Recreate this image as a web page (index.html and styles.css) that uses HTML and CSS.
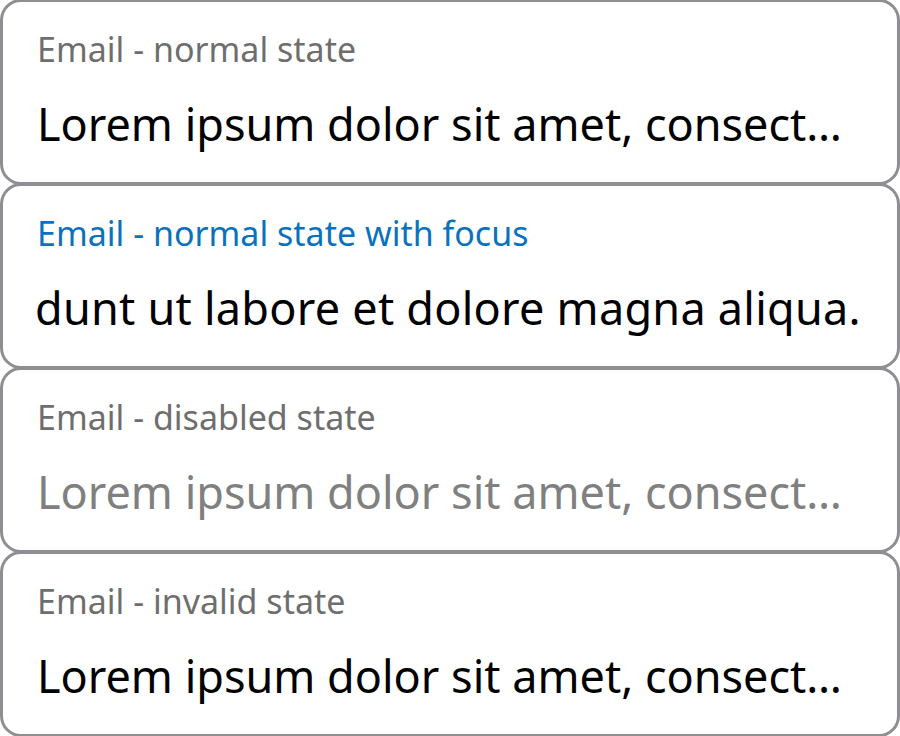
FILE: index.html
```html
<!DOCTYPE html>
<html lang="en">
<head>
<meta charset="utf-8">
<title>Email fields</title>
<link rel="stylesheet" href="styles.css">
</head>
<body>
<div class="list">
  <div class="field">
    <div class="label">Email - normal state</div>
    <div class="value">Lorem ipsum dolor sit amet, consect…</div>
  </div>
  <div class="field field-focus">
    <div class="label">Email - normal state with focus</div>
    <div class="value value-scrolled">dunt ut labore et dolore magna aliqua.</div>
  </div>
  <div class="field field-disabled">
    <div class="label">Email - disabled state</div>
    <div class="value">Lorem ipsum dolor sit amet, consect…</div>
  </div>
  <div class="field">
    <div class="label">Email - invalid state</div>
    <div class="value">Lorem ipsum dolor sit amet, consect…</div>
  </div>
</div>
</body>
</html>
```
FILE: styles.css
```css
html, body {
  margin: 0;
  padding: 0;
  background: #ffffff;
}
body {
  font-family: "Noto Sans", "Open Sans", sans-serif;
}
.list {
  display: flex;
  flex-direction: column;
  padding: 0 1px;
}
.field {
  box-sizing: border-box;
  height: 184px;
  border: 2px solid #8e8e93;
  border-radius: 20px;
  padding: 27px 34px 0 34px;
  background: #ffffff;
  box-shadow: 0 0 0 1px #8e8e93;
}
.label {
  font-size: 34px;
  line-height: 40px;
  color: #6e6e6e;
  white-space: nowrap;
}
.value {
  margin-top: 28px;
  font-size: 45px;
  line-height: 54px;
  color: #000000;
  white-space: nowrap;
}
.value-scrolled {
  margin-left: -2px;
  letter-spacing: 0.25px;
}
.field-focus .label {
  color: #0a72bd;
}
.field-disabled .value {
  color: #808080;
}
```
